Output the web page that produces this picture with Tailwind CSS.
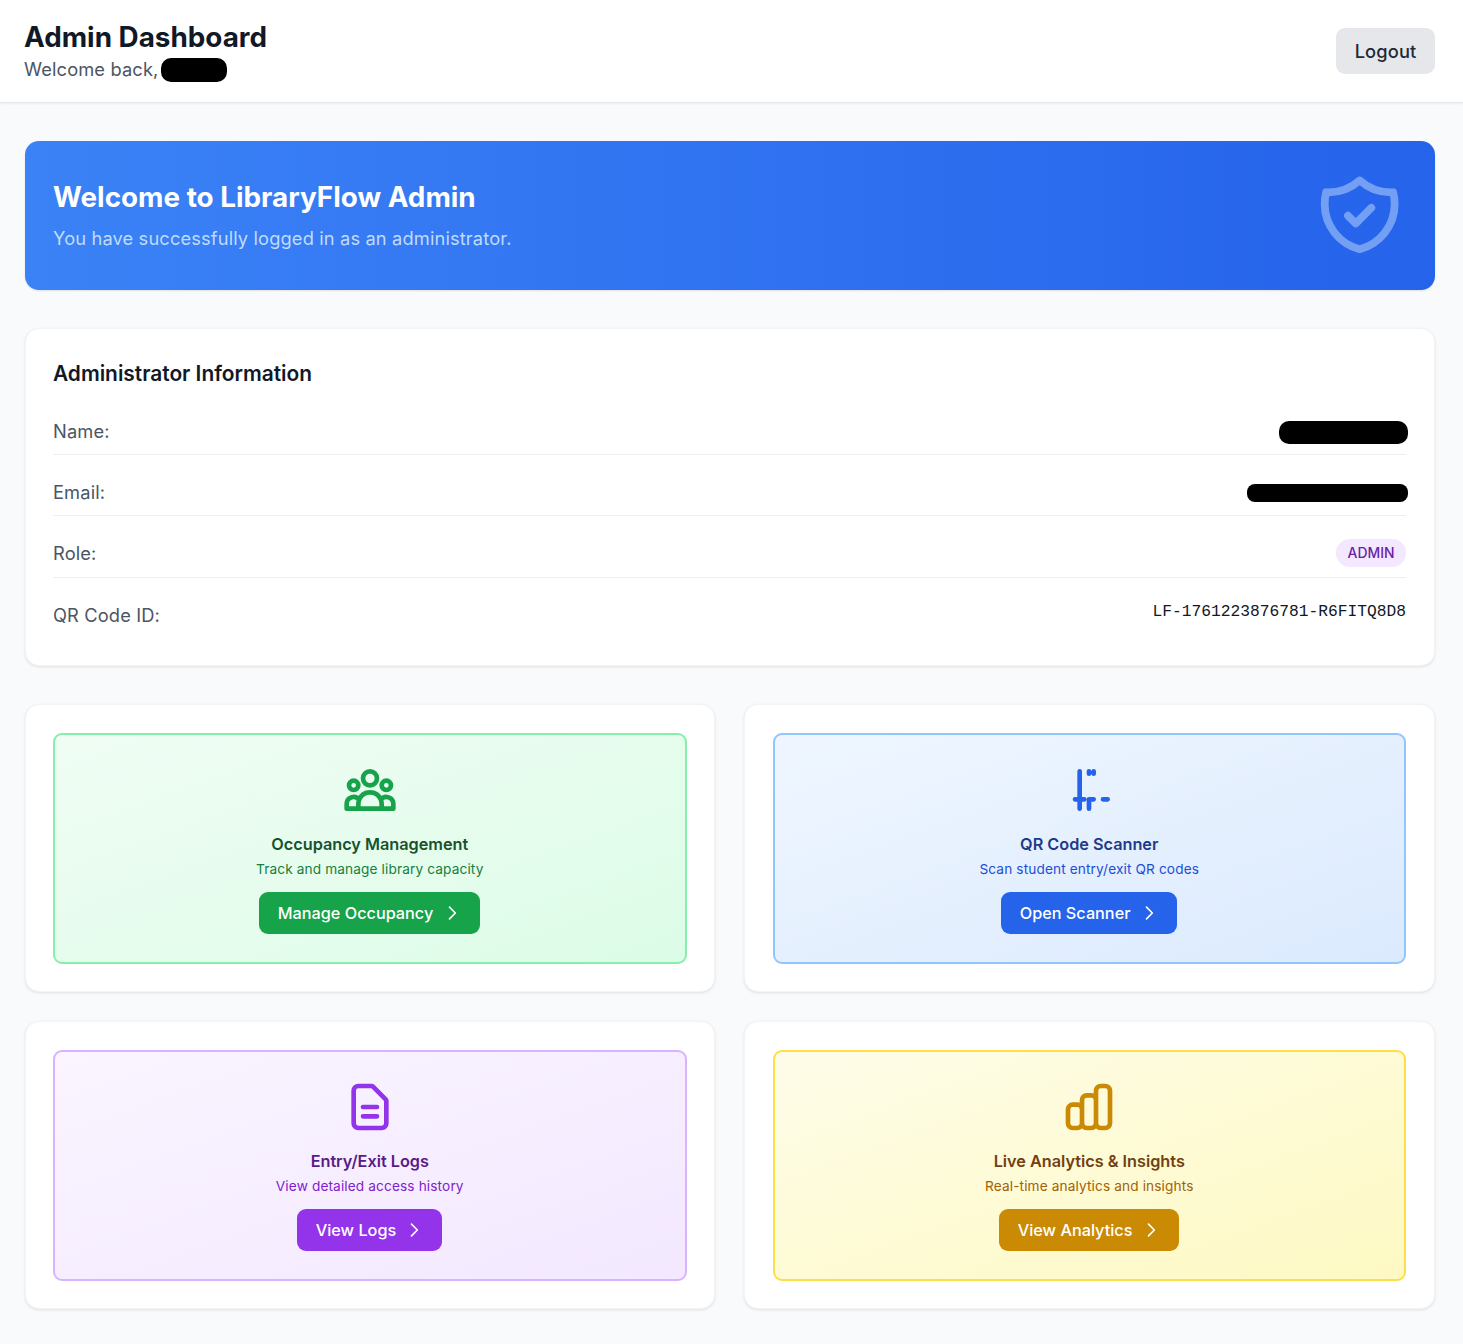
<!DOCTYPE html>
<html lang="en">
<head>
<meta charset="utf-8">
<title>Admin Dashboard</title>
<script src="https://cdn.jsdelivr.net/npm/@tailwindcss/browser@4"></script>
</head>
<body class="bg-[#f9fafb] font-[Inter,sans-serif] text-[18.3px] leading-[28px] tracking-[0.13px] text-[#111827]">
<header class="flex h-[103px] items-center justify-between border-b border-[#e5e7eb] bg-white pl-6 pr-7 shadow-[0_1px_2px_rgba(0,0,0,0.05)]">
  <div>
    <h1 class="text-[27.85px] font-bold leading-[37px] tracking-normal">Admin Dashboard</h1>
    <p class="-mt-px flex items-center text-[#4b5563]">Welcome back,<b class="ml-[2.5px] mt-px h-6 w-[66px] rounded-[10px] bg-black"></b></p>
  </div>
  <button class="h-[46px] w-[99px] rounded-[9px] bg-[#e5e7eb] font-medium text-[#1f2937]">Logout</button>
</header>
<main class="flex flex-col gap-[38px] pb-[35px] pl-[24.5px] pr-[28.5px] pt-[38px]">
  <section class="flex h-[149px] items-center justify-between rounded-[14px] bg-[linear-gradient(to_right,#3b82f6,#2563eb)] px-[28.5px] shadow-[0_1px_2px_rgba(0,0,0,0.1)]">
    <div class="pb-px">
      <h2 class="mb-2 text-[27.85px] font-bold leading-[37px] tracking-normal text-white">Welcome to LibraryFlow Admin</h2>
      <p class="text-[#bfdbfe]">You have successfully logged in as an administrator.</p>
    </div>
    <svg class="size-[93.3px] text-[#bfdbfe] opacity-50" viewBox="0 0 24 24" fill="none" stroke="currentColor" stroke-width="2" stroke-linecap="round" stroke-linejoin="round"><path d="M9 12l2 2 4-4m5.618-4.016A11.955 11.955 0 0112 2.944a11.955 11.955 0 01-8.618 3.04A12.02 12.02 0 003 9c0 5.591 3.824 10.29 9 11.622 5.176-1.332 9-6.03 9-11.622 0-1.042-.133-2.052-.382-3.016z"/></svg>
  </section>
  <section class="h-[338px] rounded-[14px] border border-[#f3f4f6] bg-white px-[27.5px] pt-[30px] shadow-[0_1px_3px_rgba(0,0,0,0.1)]">
    <h3 class="text-[20.87px] font-semibold leading-[30px] tracking-normal">Administrator Information</h3>
    <div class="mt-[14px]">
      <div class="flex h-[52px] items-center justify-between border-b border-[#eeeff2] pt-[4px] text-[#4b5563]"><span>Name:</span><b class="-mr-[1.5px] mt-[3px] h-[23px] w-[129px] rounded-[10px] bg-black"></b></div>
      <div class="mt-[9px] flex h-[52px] items-center justify-between border-b border-[#eeeff2] pt-[5px] text-[#4b5563]"><span>Email:</span><b class="-mr-[1.5px] mt-px h-[18px] w-[161px] rounded-[8px] bg-black"></b></div>
      <div class="mt-[9px] flex h-[53px] items-center justify-between border-b border-[#eeeff2] pt-[3px] text-[#4b5563]"><span>Role:</span><b class="flex h-7 w-[70px] items-center justify-center rounded-full bg-[#f3e8ff] text-[13.9px] font-medium tracking-normal text-[#6b21a8]">ADMIN</b></div>
      <div class="mt-[9px] flex h-[52px] items-center justify-between pt-[3px] text-[#4b5563]"><span>QR Code ID:</span><b class="mb-[6px] font-['Liberation_Mono',monospace] text-[16.25px] font-normal tracking-normal text-[#111827]">LF-1761223876781-R6FITQ8D8</b></div>
    </div>
  </section>
  <section class="grid grid-cols-2 gap-[29px]">
    <article class="h-[288px] rounded-[14px] border border-[#f3f4f6] bg-white p-[27.5px] shadow-[0_1px_3px_rgba(0,0,0,0.1)]">
      <div class="flex h-full flex-col items-center rounded-[9px] border-2 border-[#86efac] bg-[linear-gradient(to_bottom_right,#f0fdf4,#dcfce7)] pt-[27.5px]">
        <svg class="size-14 text-[#16a34a]" viewBox="0 0 24 24" fill="none" stroke="currentColor" stroke-width="2" stroke-linecap="round" stroke-linejoin="round"><path d="M17 20h5v-2a3 3 0 00-5.356-1.857M17 20H7m10 0v-2c0-.656-.126-1.283-.356-1.857M7 20H2v-2a3 3 0 015.356-1.857M7 20v-2c0-.656.126-1.283.356-1.857m0 0a5.002 5.002 0 019.288 0M15 7a3 3 0 11-6 0 3 3 0 016 0zm6 3a2 2 0 11-4 0 2 2 0 014 0zM7 10a2 2 0 11-4 0 2 2 0 014 0z"/></svg>
        <h4 class="mt-[14.5px] text-[16.24px] font-semibold leading-[23px] tracking-normal text-[#14532d]">Occupancy Management</h4>
        <p class="mt-[4.5px] text-[13.65px] leading-[19px] text-[#15803d]">Track and manage library capacity</p>
        <button class="mt-[13px] flex h-[42px] w-[221px] items-center justify-between rounded-[9px] bg-[#16a34a] pl-[18.5px] pr-[18px] text-[16.24px] font-medium tracking-normal text-white">Manage Occupancy<svg class="size-5" viewBox="0 0 24 24" fill="none" stroke="currentColor" stroke-width="2" stroke-linecap="round" stroke-linejoin="round"><path d="M9 5l7 7-7 7"/></svg></button>
      </div>
    </article>
    <article class="h-[288px] rounded-[14px] border border-[#f3f4f6] bg-white p-[27.5px] shadow-[0_1px_3px_rgba(0,0,0,0.1)]">
      <div class="flex h-full flex-col items-center rounded-[9px] border-2 border-[#93c5fd] bg-[linear-gradient(to_bottom_right,#eff6ff,#dbeafe)] pt-[27.5px]">
        <svg class="size-14 text-[#2563eb]" viewBox="0 0 24 24" fill="none" stroke="currentColor" stroke-width="2" stroke-linecap="round" stroke-linejoin="round"><path d="M8 4v16M12 4v1M14 4v1M6 16h4M14 16h-2v4M18 16h2"/></svg>
        <h4 class="mt-[14.5px] text-[16.24px] font-semibold leading-[23px] tracking-normal text-[#1e3a8a]">QR Code Scanner</h4>
        <p class="mt-[4.5px] text-[13.65px] leading-[19px] text-[#1d4ed8]">Scan student entry/exit QR codes</p>
        <button class="mt-[13px] flex h-[42px] w-[176px] items-center justify-between rounded-[9px] bg-[#2563eb] pl-[18.5px] pr-[18px] text-[16.24px] font-medium tracking-normal text-white">Open Scanner<svg class="size-5" viewBox="0 0 24 24" fill="none" stroke="currentColor" stroke-width="2" stroke-linecap="round" stroke-linejoin="round"><path d="M9 5l7 7-7 7"/></svg></button>
      </div>
    </article>
    <article class="h-[288px] rounded-[14px] border border-[#f3f4f6] bg-white p-[27.5px] shadow-[0_1px_3px_rgba(0,0,0,0.1)]">
      <div class="flex h-full flex-col items-center rounded-[9px] border-2 border-[#d8b4fe] bg-[linear-gradient(to_bottom_right,#faf5ff,#f3e8ff)] pt-[27.5px]">
        <svg class="size-14 text-[#9333ea]" viewBox="0 0 24 24" fill="none" stroke="currentColor" stroke-width="2" stroke-linecap="round" stroke-linejoin="round"><path d="M9 12h6m-6 4h6m2 5H7a2 2 0 01-2-2V5a2 2 0 012-2h5.586a1 1 0 01.707.293l5.414 5.414a1 1 0 01.293.707V19a2 2 0 01-2 2z"/></svg>
        <h4 class="mt-[14.5px] text-[16.24px] font-semibold leading-[23px] tracking-normal text-[#581c87]">Entry/Exit Logs</h4>
        <p class="mt-[4.5px] text-[13.65px] leading-[19px] text-[#7e22ce]">View detailed access history</p>
        <button class="mt-[13px] flex h-[42px] w-[145px] items-center justify-between rounded-[9px] bg-[#9333ea] pl-[18.5px] pr-[18px] text-[16.24px] font-medium tracking-normal text-white">View Logs<svg class="size-5" viewBox="0 0 24 24" fill="none" stroke="currentColor" stroke-width="2" stroke-linecap="round" stroke-linejoin="round"><path d="M9 5l7 7-7 7"/></svg></button>
      </div>
    </article>
    <article class="h-[288px] rounded-[14px] border border-[#f3f4f6] bg-white p-[27.5px] shadow-[0_1px_3px_rgba(0,0,0,0.1)]">
      <div class="flex h-full flex-col items-center rounded-[9px] border-2 border-[#fde047] bg-[linear-gradient(to_bottom_right,#fefce8,#fef9c3)] pt-[27.5px]">
        <svg class="size-14 text-[#ca8a04]" viewBox="0 0 24 24" fill="none" stroke="currentColor" stroke-width="2" stroke-linecap="round" stroke-linejoin="round"><path d="M9 19v-6a2 2 0 00-2-2H5a2 2 0 00-2 2v6a2 2 0 002 2h2a2 2 0 002-2zm0 0V9a2 2 0 012-2h2a2 2 0 012 2v10m-6 0a2 2 0 002 2h2a2 2 0 002-2m0 0V5a2 2 0 012-2h2a2 2 0 012 2v14a2 2 0 01-2 2h-2a2 2 0 01-2-2z"/></svg>
        <h4 class="mt-[14.5px] text-[16.24px] font-semibold leading-[23px] tracking-normal text-[#713f12]">Live Analytics &amp; Insights</h4>
        <p class="mt-[4.5px] text-[13.65px] leading-[19px] text-[#a16207]">Real-time analytics and insights</p>
        <button class="mt-[13px] flex h-[42px] w-[180px] items-center justify-between rounded-[9px] bg-[#ca8a04] pl-[18.5px] pr-[18px] text-[16.24px] font-medium tracking-normal text-white">View Analytics<svg class="size-5" viewBox="0 0 24 24" fill="none" stroke="currentColor" stroke-width="2" stroke-linecap="round" stroke-linejoin="round"><path d="M9 5l7 7-7 7"/></svg></button>
      </div>
    </article>
  </section>
</main>
</body>
</html>
